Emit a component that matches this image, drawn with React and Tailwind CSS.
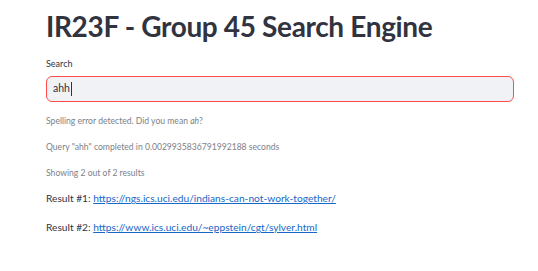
import React from 'react'

const RESULTS = [
  'https://ngs.ics.uci.edu/indians-can-not-work-together/',
  'https://www.ics.uci.edu/~eppstein/cgt/sylver.html',
]

export default function App() {
  return (
    <div className="w-[538px] h-[271px] bg-white font-['Lato',sans-serif] text-[#31333f]">
      <div className="w-[468px] ml-[46px] pt-[9px]">
        <h1 className="text-[28px] leading-[34px] font-bold tracking-[-0.35px]">IR23F - Group 45 Search Engine</h1>

        <label className="block mt-[15px] text-[9px] leading-[12px]">Search</label>
        <div className="mt-[6px] h-[26px] rounded-[6px] border border-[#ff4b4b] bg-[#f0f2f6] flex items-center px-[6px] text-[10.5px]">
          <span>ahh</span>
          <span className="ml-[1px] w-px h-[14px] bg-[#31333f]" />
        </div>

        <div className="mt-[13px] flex flex-col gap-[14px] text-[8.6px] leading-[12px] text-[#7d7f87]">
          <p>
            Spelling error detected. Did you mean <em>ah</em>?
          </p>
          <p>Query "ahh" completed in 0.0029935836791992188 seconds</p>
          <p>Showing 2 out of 2 results</p>
        </div>

        <div className="mt-[12px] flex flex-col gap-[15px] text-[10.2px] leading-[14px]">
          {RESULTS.map((url, i) => (
            <p key={url}>
              Result #{i + 1}:{' '}
              <a href={url} className="text-[#1766c9] underline">
                {url}
              </a>
            </p>
          ))}
        </div>
      </div>
    </div>
  )
}
